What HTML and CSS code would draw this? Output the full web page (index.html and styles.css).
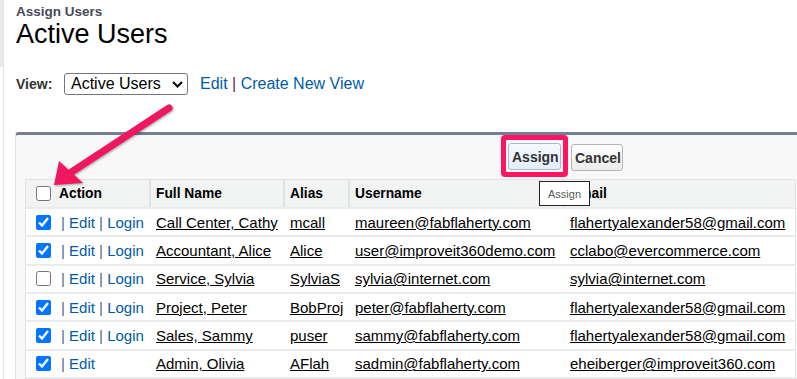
FILE: index.html
```html
<!DOCTYPE html>
<html lang="en">
<head>
<meta charset="utf-8">
<title>Assign Users</title>
<link rel="stylesheet" href="styles.css">
</head>
<body>
<div class="page">
  <div class="edge"></div>
  <main class="content">
    <div class="crumb">Assign Users</div>
    <h1 class="title">Active Users</h1>
    <div class="view-row">
      <span class="view-label">View:</span>
      <div class="select">
        <span>Active Users</span>
        <svg class="chev" width="11" height="7" viewBox="0 0 11 7"><path d="M1 1 L5.5 5.5 L10 1" fill="none" stroke="#000" stroke-width="2"/></svg>
      </div>
      <div class="links"><a class="link">Edit</a> <span class="sep">|</span> <a class="link">Create New View</a></div>
    </div>
    <section class="panel">
      <div class="buttons">
        <span class="highlight"><button class="btn btn-assign">Assign</button></span>
        <button class="btn btn-cancel">Cancel</button>
      </div>
      <span class="tooltip">Assign</span>
      <table class="list">
        <thead>
          <tr>
            <th class="c-action"><div class="act"><input type="checkbox"><span>Action</span></div></th>
            <th class="c-name">Full Name</th>
            <th class="c-alias">Alias</th>
            <th class="c-user">Username</th>
            <th class="c-email">Email</th>
          </tr>
        </thead>
        <tbody>
          <tr>
            <td><div class="act"><input type="checkbox" checked><span class="acts"><span class="pipe">|</span> <a class="link">Edit</a> <span class="pipe">|</span> <a class="link">Login</a></span></div></td>
            <td><a class="rec">Call Center, Cathy</a></td>
            <td><a class="rec">mcall</a></td>
            <td><a class="rec">maureen@fabflaherty.com</a></td>
            <td><a class="rec">flahertyalexander58@gmail.com</a></td>
          </tr>
          <tr>
            <td><div class="act"><input type="checkbox" checked><span class="acts"><span class="pipe">|</span> <a class="link">Edit</a> <span class="pipe">|</span> <a class="link">Login</a></span></div></td>
            <td><a class="rec">Accountant, Alice</a></td>
            <td><a class="rec">Alice</a></td>
            <td><a class="rec">user@improveit360demo.com</a></td>
            <td><a class="rec">cclabo@evercommerce.com</a></td>
          </tr>
          <tr>
            <td><div class="act"><input type="checkbox"><span class="acts"><span class="pipe">|</span> <a class="link">Edit</a> <span class="pipe">|</span> <a class="link">Login</a></span></div></td>
            <td><a class="rec">Service, Sylvia</a></td>
            <td><a class="rec">SylviaS</a></td>
            <td><a class="rec">sylvia@internet.com</a></td>
            <td><a class="rec">sylvia@internet.com</a></td>
          </tr>
          <tr>
            <td><div class="act"><input type="checkbox" checked><span class="acts"><span class="pipe">|</span> <a class="link">Edit</a> <span class="pipe">|</span> <a class="link">Login</a></span></div></td>
            <td><a class="rec">Project, Peter</a></td>
            <td><a class="rec">BobProj</a></td>
            <td><a class="rec">peter@fabflaherty.com</a></td>
            <td><a class="rec">flahertyalexander58@gmail.com</a></td>
          </tr>
          <tr>
            <td><div class="act"><input type="checkbox" checked><span class="acts"><span class="pipe">|</span> <a class="link">Edit</a> <span class="pipe">|</span> <a class="link">Login</a></span></div></td>
            <td><a class="rec">Sales, Sammy</a></td>
            <td><a class="rec">puser</a></td>
            <td><a class="rec">sammy@fabflaherty.com</a></td>
            <td><a class="rec">flahertyalexander58@gmail.com</a></td>
          </tr>
          <tr class="last">
            <td><div class="act"><input type="checkbox" checked><span class="acts"><span class="pipe">|</span> <a class="link">Edit</a></span></div></td>
            <td><a class="rec">Admin, Olivia</a></td>
            <td><a class="rec">AFlah</a></td>
            <td><a class="rec">sadmin@fabflaherty.com</a></td>
            <td><a class="rec">eheiberger@improveit360.com</a></td>
          </tr>
        </tbody>
      </table>
    </section>
  </main>
  <svg class="arrow" width="200" height="200" viewBox="0 0 200 200">
    <line x1="169" y1="108" x2="70" y2="173" stroke="#f0175e" stroke-width="7" stroke-linecap="round"/>
    <polygon points="54,185 59,161 83,183" fill="#f0175e"/>
  </svg>
</div>
</body>
</html>
```

FILE: styles.css
```css
* { box-sizing: border-box; }
html { overflow: hidden; }
body {
  margin: 0;
  font-family: "Liberation Sans", Arial, sans-serif;
  color: #000;
  background: #fff;
}
.page {
  position: relative;
  display: flex;
  height: 379px;
  overflow: hidden;
}
.edge {
  width: 3px;
  flex: none;
  background: linear-gradient(#e8e8e8 0, #e8e8e8 67px, #fff 67px);
}
.content {
  flex: 1;
  min-width: 0;
  border-left: 1px solid #e2e5ea;
  padding-left: 12px;
}
.crumb {
  padding-top: 4px;
  font-size: 13.5px;
  line-height: 16px;
  font-weight: bold;
  color: #4a4a56;
}
.title {
  margin: 0;
  font-size: 27px;
  line-height: 28px;
  font-weight: normal;
  color: #000;
}
.view-row {
  display: flex;
  align-items: center;
  height: 22px;
  margin-top: 25px;
}
.view-label {
  width: 48px;
  font-size: 14px;
  font-weight: bold;
  color: #333;
}
.select {
  display: flex;
  align-items: center;
  width: 124px;
  height: 22px;
  padding-left: 6px;
  border: 1px solid #767676;
  border-radius: 3px;
  font-size: 16px;
  background: #fff;
}
.chev { margin-left: auto; margin-right: 4px; }
.links {
  margin-left: 12px;
  font-size: 16px;
  white-space: nowrap;
}
.link { color: #015ba7; text-decoration: none; }
.sep { color: #5a2e40; }

.panel {
  position: relative;
  margin-top: 37px;
  margin-left: -1px;
  margin-right: -40px;
  padding-bottom: 2px;
  background: #f8f8f8;
  border-top: 3px solid #747e96;
  border-left: 1px solid #e0e3e5;
  border-top-left-radius: 4px;
}
.buttons {
  display: flex;
  align-items: center;
  gap: 3px;
  height: 42px;
  margin-bottom: 2px;
  padding-left: 485px;
}
.highlight {
  display: inline-flex;
  padding: 3px 2px 2px 2px;
  border: 5px solid #ff1464;
  border-radius: 4px;
}
.btn {
  height: 27px;
  padding: 0 3px;
  font-family: inherit;
  font-size: 14px;
  font-weight: bold;
  color: #333;
  border: 1px solid #b5b5b5;
  border-radius: 3px;
  background: linear-gradient(#ffffff, #ececec);
}
.btn-assign {
  width: 53px;
  background: linear-gradient(#f5faff, #e2eefa);
  border-color: #a9b7c7;
}
.btn-cancel { width: 52px; margin-top: 3px; }
.tooltip {
  position: absolute;
  left: 523px;
  top: 46px;
  z-index: 2;
  display: flex;
  align-items: center;
  justify-content: center;
  width: 51px;
  height: 25px;
  background: #fff;
  border: 1px solid #222;
  font-size: 11px;
  color: #5a5a5a;
}

.list {
  margin-left: 9px;
  width: 771px;
  table-layout: fixed;
  border-collapse: separate;
  border-spacing: 0;
}
.list th {
  height: 28px;
  padding: 0 0 0 5px;
  text-align: left;
  font-size: 13.8px;
  font-weight: bold;
  color: #000;
  background: #f2f3f3;
  border-top: 1px solid #e0e3e5;
  border-left: 2px solid #e0e3e5;
  white-space: nowrap;
}
.list th.c-action { width: 124px; padding-left: 10px; border-left-width: 1px; }
.list th.c-name { width: 134px; }
.list th.c-alias { width: 65px; }
.list th.c-user { width: 215px; }
.list th.c-email { width: 233px; border-right: 1px solid #e0e3e5; }
.list td {
  height: 28.33px;
  padding: 0 0 0 7px;
  font-size: 15px;
  background: #fff;
  border-top: 2px solid #ebebeb;
  white-space: nowrap;
  overflow: hidden;
}
.list td:first-child { padding-left: 10px; border-left: 1px solid #e0e3e5; }
.list td:last-child { border-right: 1px solid #e0e3e5; }
.list tr.last td { height: 30.33px; border-bottom: 2px solid #ebebeb; }
.act { display: flex; align-items: center; gap: 8px; }
.list td .act { gap: 10px; }
.act input {
  width: 15px;
  height: 15px;
  margin: 0;
  flex: none;
  accent-color: #0075ff;
}
.pipe { color: #51698c; }
.rec { color: #000; text-decoration: underline; }

.arrow {
  position: absolute;
  left: 0;
  top: 0;
  z-index: 3;
  pointer-events: none;
  filter: drop-shadow(1px 1px 1px rgba(0, 0, 0, 0.35));
}
```
